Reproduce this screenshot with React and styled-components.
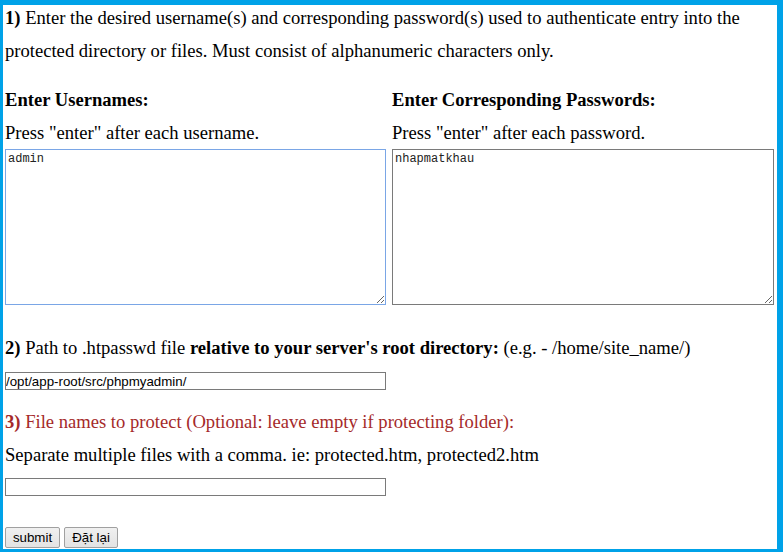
import React from 'react';
import styled, { createGlobalStyle } from 'styled-components';

const GlobalStyle = createGlobalStyle`
  html, body {
    margin: 0;
    padding: 0;
    background: #fff;
  }
`;

const Frame = styled.div`
  box-sizing: border-box;
  width: 783px;
  height: 552px;
  overflow: hidden;
  border-style: solid;
  border-color: #00a2e8;
  border-width: 5px 6px 3px 3px;
  padding: 0 3px 0 2px;
  font-family: "Liberation Serif", "Times New Roman", serif;
  font-size: 18.6px;
  line-height: 33px;
  color: #000;
`;

const Para = styled.p`
  margin: ${p => p.$top || 0}px 0 0 0;
  color: ${p => p.$tone || '#000'};
`;

const Num = styled.b`
  font-weight: bold;
`;

const Columns = styled.div`
  display: grid;
  grid-template-columns: 381px 382px;
  column-gap: 6px;
  margin-top: 16px;
`;

const Column = styled.div`
  display: flex;
  flex-direction: column;
`;

const Heading = styled.div`
  font-weight: bold;
`;

const Area = styled.textarea`
  display: block;
  box-sizing: border-box;
  width: 100%;
  height: 156px;
  margin: 0;
  padding: 2px 2px;
  font-family: "Liberation Mono", "DejaVu Sans Mono", monospace;
  font-size: 12px;
  line-height: 15px;
  color: #222;
  border: 1px solid ${p => (p.$focused ? '#7aa6e6' : '#7a7a7a')};
  outline: none;
  resize: both;
`;

const TextInput = styled.input`
  display: block;
  box-sizing: border-box;
  width: 381px;
  height: 18px;
  margin: ${p => p.$top}px 0 0 0;
  padding: 0 1px 0 0;
  font-family: "Liberation Sans", Arial, sans-serif;
  font-size: 13.3px;
  color: #000;
  border: 1px solid #7a7a7a;
  outline: none;
`;

const Buttons = styled.div`
  display: flex;
  gap: 4px;
  margin-top: 31px;
`;

const Button = styled.button`
  box-sizing: border-box;
  height: 21px;
  width: ${p => p.$w}px;
  padding: 0 6px;
  font-family: "Liberation Sans", Arial, sans-serif;
  font-size: 13.3px;
  color: #000;
  background: linear-gradient(#f0f0f0, #e3e3e3);
  border: 1px solid #a0a0a0;
  border-radius: 2px;
`;

export default function App() {
  return (
    <>
      <GlobalStyle />
      <Frame>
        <Para $top={-4}>
          <Num>1)</Num> Enter the desired username(s) and corresponding password(s) used to authenticate entry into the
          protected directory or files. Must consist of alphanumeric characters only.
        </Para>

        <Columns>
          <Column>
            <Heading>Enter Usernames:</Heading>
            <div>Press "enter" after each username.</div>
            <Area $focused defaultValue="admin" autoFocus />
          </Column>
          <Column>
            <Heading>Enter Corresponding Passwords:</Heading>
            <div>Press "enter" after each password.</div>
            <Area defaultValue="nhapmatkhau" />
          </Column>
        </Columns>

        <Para $top={26}>
          <Num>2)</Num> Path to .htpasswd file <b>relative to your server's root directory:</b> (e.g. - /home/site_name/)
        </Para>
        <TextInput $top={8} defaultValue="/opt/app-root/src/phpmyadmin/" />

        <Para $top={15} $tone="#a52a2a">
          <Num>3)</Num> File names to protect (Optional: leave empty if protecting folder):
        </Para>
        <Para>Separate multiple files with a comma. ie: protected.htm, protected2.htm</Para>
        <TextInput $top={7} defaultValue="" />

        <Buttons>
          <Button $w={55}>submit</Button>
          <Button $w={54}>Đặt lại</Button>
        </Buttons>
      </Frame>
    </>
  );
}
